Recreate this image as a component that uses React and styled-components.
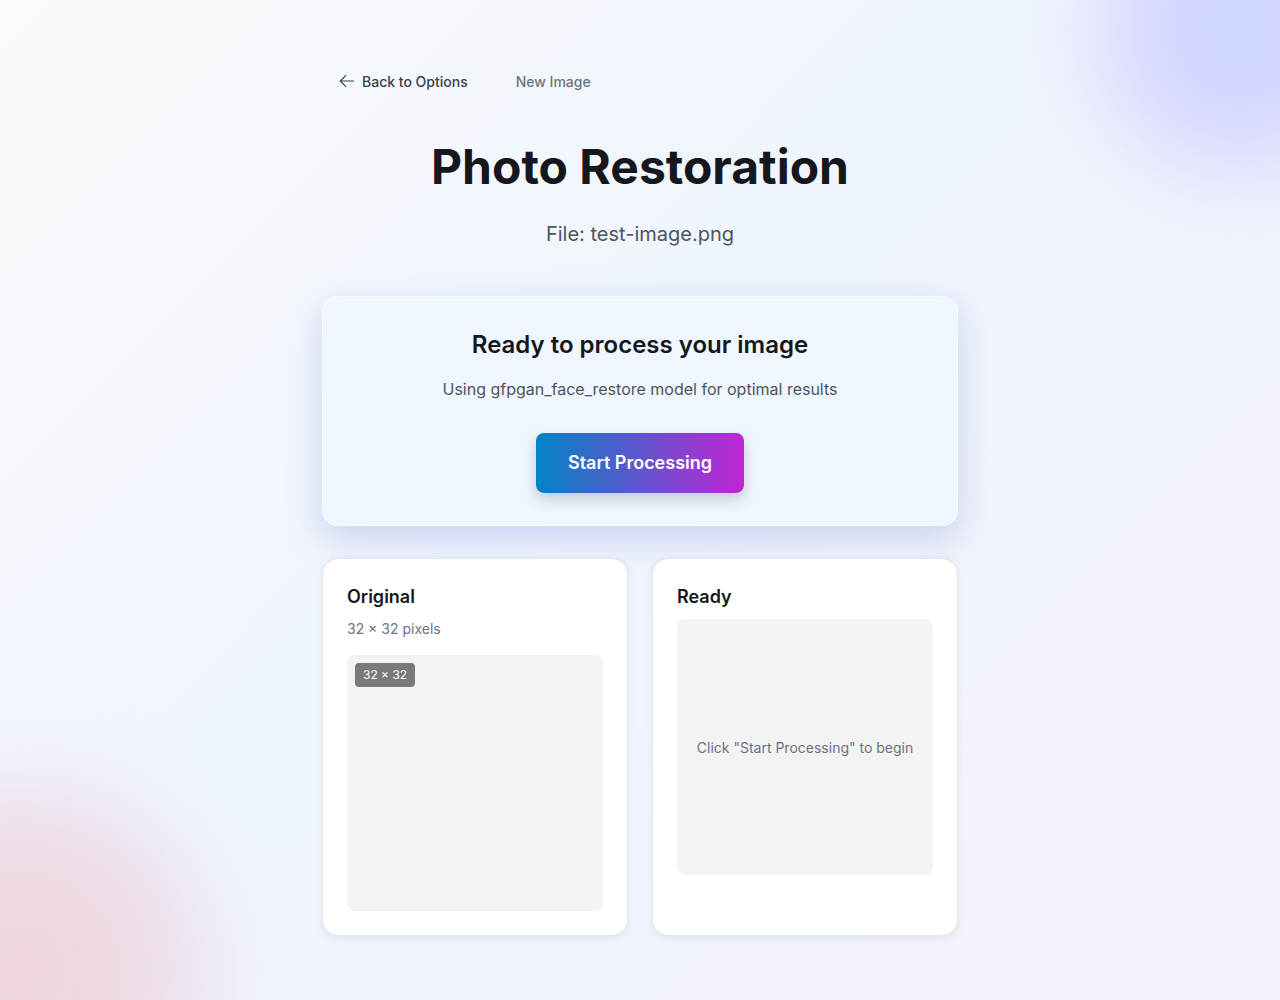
import React from "react";
import styled, { createGlobalStyle } from "styled-components";

const GlobalStyle = createGlobalStyle`
  * { box-sizing: border-box; }
  body {
    margin: 0;
    font-family: Inter, "Noto Sans", sans-serif;
    color: #111827;
    background: linear-gradient(135deg, #f9fafc 0%, #eff5fd 45%, #f3f3fc 100%);
    min-height: 1000px;
    overflow: hidden;
  }
`;

const Page = styled.div`
  position: relative;
  min-height: 1000px;
  overflow: hidden;
`;

const Blob = styled.div`
  position: absolute;
  width: ${(p) => p.size}px;
  height: ${(p) => p.size}px;
  border-radius: 50%;
  background: ${(p) => p.color};
  filter: blur(40px);
  top: ${(p) => p.top}px;
  left: ${(p) => p.left}px;
  pointer-events: none;
`;

const Container = styled.main`
  position: relative;
  width: 636px;
  margin: 0 auto;
  padding-top: 63px;
`;

const Nav = styled.nav`
  display: flex;
  align-items: center;
  gap: 16px;
  height: 36px;
`;

const NavButton = styled.button`
  display: flex;
  align-items: center;
  gap: 6px;
  height: 36px;
  padding: 0 16px;
  border: none;
  background: transparent;
  font-family: inherit;
  font-size: 14px;
  font-weight: 500;
  color: ${(p) => (p.muted ? "#6b7280" : "#374151")};
  cursor: pointer;
`;

const Title = styled.h1`
  margin: 38px 0 23px;
  text-align: center;
  font-size: 48px;
  line-height: 60px;
  font-weight: 700;
  color: #16171c;
`;

const FileName = styled.p`
  margin: 0 0 48px;
  text-align: center;
  font-size: 20px;
  line-height: 28px;
  color: #4b5563;
`;

const ProcessCard = styled.section`
  padding: 32px;
  border: 1px solid rgba(255, 255, 255, 0.6);
  border-radius: 16px;
  background: rgba(240, 245, 253, 0.92);
  box-shadow: 0 12px 36px rgba(100, 110, 210, 0.28);
  text-align: center;
`;

const CardHeading = styled.h2`
  margin: 0;
  font-size: 24px;
  line-height: 32px;
  font-weight: 600;
  color: #16171c;
`;

const CardText = styled.p`
  margin: 16px 0 32px;
  font-size: 16px;
  line-height: 24px;
  color: #4b5563;
`;

const StartButton = styled.button`
  padding: 16px 32px;
  border: none;
  border-radius: 8px;
  background: linear-gradient(90deg, #0284c7 0%, #c026d3 100%);
  color: #fff;
  font-family: inherit;
  font-size: 18px;
  line-height: 28px;
  font-weight: 600;
  box-shadow: 0 6px 14px rgba(60, 70, 120, 0.25);
  cursor: pointer;
`;

const Grid = styled.div`
  display: grid;
  grid-template-columns: 1fr 1fr;
  gap: 24px;
  margin-top: 32px;
`;

const Panel = styled.div`
  padding: 24px;
  border: 1px solid #e5e7eb;
  border-radius: 16px;
  background: #fff;
  box-shadow: 0 2px 8px rgba(30, 40, 90, 0.08);
`;

const PanelTitle = styled.h3`
  margin: 0 0 8px;
  font-size: 18px;
  line-height: 28px;
  font-weight: 600;
  color: #16171c;
`;

const PanelMeta = styled.p`
  margin: 0 0 16px;
  font-size: 14px;
  line-height: 20px;
  color: #6b7280;
`;

const ImageBox = styled.div`
  position: relative;
  display: flex;
  align-items: center;
  justify-content: center;
  width: 256px;
  height: 256px;
  border-radius: 8px;
  background: #f3f3f3;
  font-size: 14px;
  color: #6b7280;
`;

const Badge = styled.span`
  position: absolute;
  top: 8px;
  left: 8px;
  padding: 4px 8px;
  border-radius: 4px;
  background: rgba(0, 0, 0, 0.5);
  color: #fff;
  font-size: 12px;
  line-height: 16px;
`;

const ArrowLeft = () => (
  <svg width="18" height="18" viewBox="0 0 24 24" fill="none" stroke="currentColor" strokeWidth="1.5" strokeLinecap="round" strokeLinejoin="round">
    <path d="M10.5 19.5 3 12m0 0 7.5-7.5M3 12h18" />
  </svg>
);

export default function App() {
  return (
    <Page>
      <GlobalStyle />
      <Blob size={320} top={-130} left={1080} color="radial-gradient(circle, rgba(195,210,255,0.95), rgba(215,205,255,0.65) 60%, transparent 75%)" />
      <Blob size={400} top={770} left={-180} color="radial-gradient(circle, rgba(240,208,212,0.95), rgba(235,212,228,0.65) 60%, transparent 75%)" />
      <Container>
        <Nav>
          <NavButton>
            <ArrowLeft />
            Back to Options
          </NavButton>
          <NavButton muted>New Image</NavButton>
        </Nav>
        <Title>Photo Restoration</Title>
        <FileName>File: test-image.png</FileName>
        <ProcessCard>
          <CardHeading>Ready to process your image</CardHeading>
          <CardText>Using gfpgan_face_restore model for optimal results</CardText>
          <StartButton>Start Processing</StartButton>
        </ProcessCard>
        <Grid>
          <Panel>
            <PanelTitle>Original</PanelTitle>
            <PanelMeta>32 × 32 pixels</PanelMeta>
            <ImageBox>
              <Badge>32 × 32</Badge>
            </ImageBox>
          </Panel>
          <Panel>
            <PanelTitle>Ready</PanelTitle>
            <ImageBox>Click "Start Processing" to begin</ImageBox>
          </Panel>
        </Grid>
      </Container>
    </Page>
  );
}
